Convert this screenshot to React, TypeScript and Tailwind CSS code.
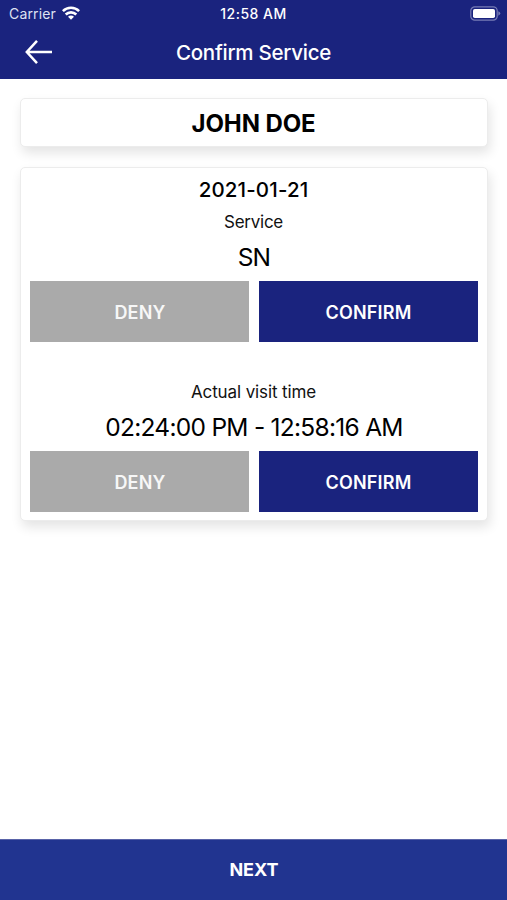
function Choices() {
  return (
    <div className="grid grid-cols-2 gap-[10px] px-[9px] text-[18px] leading-[61px] font-semibold text-white">
      <button className="h-[61px] bg-[#aaaaaa] pt-px pl-px tracking-[0.2px] text-[#f7f7f7]">DENY</button>
      <button className="h-[61px] bg-[#1a237e] pt-px tracking-[0.2px]">CONFIRM</button>
    </div>
  );
}

const card =
  "rounded-[5px] border border-[#ececec] bg-white shadow-[2px_6px_12px_rgba(0,0,0,0.11)]";

export default function App() {
  return (
    <div className="flex h-[900px] w-[507px] flex-col overflow-hidden bg-white text-center font-['Inter',sans-serif] text-black">
      <header className="h-[79px] shrink-0 bg-[#1a237e] text-white">
        <div className="grid h-[27px] grid-cols-[1fr_auto_1fr] items-center text-[14px]">
          <div className="flex items-center gap-[6px] pl-[9px] text-[#dfe1f2]">
            <span className="tracking-[0.15px]">Carrier</span>
            <svg className="-mt-px" width="18" height="14" viewBox="0 0 18 14" fill="none" stroke="white" strokeWidth="2.6">
              <path d="M.9 5.1C5.4.7 12.6.7 17.1 5.1" />
              <path d="M3.7 8.5c3-2.9 7.6-2.9 10.6 0" />
              <path d="M6 10.8c1.7-1.6 4.3-1.6 6 0l-3 3z" fill="white" stroke="none" />
            </svg>
          </div>
          <span className="pb-px font-medium tracking-[0.5px]">12:58 AM</span>
          <svg className="mr-[6px] ml-auto" width="31" height="15" viewBox="0 0 31 15" fill="none">
            <rect x=".8" y=".8" width="26.4" height="13.4" rx="4" stroke="#777cb5" strokeWidth="1.2" />
            <rect x="3" y="3" width="22" height="9" rx="1.8" fill="white" />
            <path d="M28.3 5.3q4 2.2 0 4.4z" fill="#777cb5" />
          </svg>
        </div>
        <div className="grid h-[50px] grid-cols-[1fr_auto_1fr] items-center">
          <svg className="ml-[25px]" width="28" height="26" viewBox="0 0 28 26" fill="none" stroke="white" strokeWidth="2.5">
            <path d="M12 1.8 1.8 13 12 24.2M2 13h25" />
          </svg>
          <h1 className="pt-[2px] text-[20.5px] font-medium tracking-[-0.25px]">Confirm Service</h1>
        </div>
      </header>
      <main className="flex flex-1 flex-col gap-[20px] pr-[19px] pl-[20px] pt-[19px]">
        <section className={card + " h-[49px]"}>
          <h2 className="pr-px text-[24px] leading-[49px] font-bold tracking-[-0.1px]">JOHN DOE</h2>
        </section>
        <section className={card + " h-[354px]"}>
          <p className="pt-[6px] pr-px text-[20.5px] leading-[32px] font-medium tracking-[0.15px]">2021-01-21</p>
          <p className="pr-px text-[17px] leading-[32px] tracking-[-0.25px] text-[#111]">Service</p>
          <p className="pb-[5px] text-[24.5px] leading-[38px] tracking-[-0.9px]">SN</p>
          <Choices />
          <p className="pt-[34px] pr-px text-[17px] leading-[33px] tracking-[-0.12px] text-[#111]">Actual visit time</p>
          <p className="pb-[5px] text-[24.5px] leading-[37px] tracking-[-0.73px]">02:24:00 PM - 12:58:16 AM</p>
          <Choices />
        </section>
      </main>
      <footer className="h-[61px] shrink-0 border-t border-[#5963a8] bg-[#213490]">
        <button className="h-[60px] w-full pb-[2px] pl-px text-[18px] font-bold text-white">NEXT</button>
      </footer>
    </div>
  );
}
